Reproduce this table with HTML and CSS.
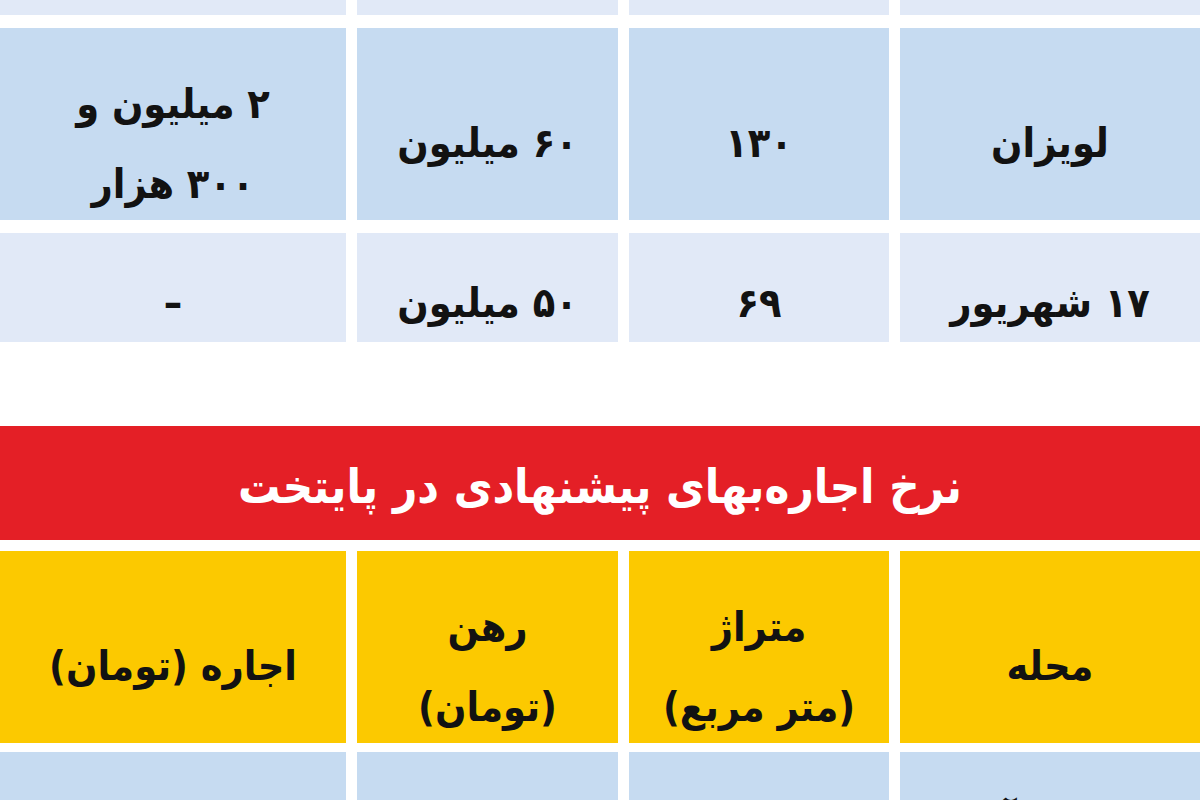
FILE: index.html
```html
<!DOCTYPE html>
<html lang="fa" dir="rtl">
<head>
<meta charset="utf-8">
<title>نرخ اجاره‌بهای پیشنهادی در پایتخت</title>
<link rel="stylesheet" href="styles.css">
</head>
<body>
<div class="page">
  <div class="table first">
    <div class="cell light short">پیروزی</div>
    <div class="cell light short">۸۵</div>
    <div class="cell light short">۴۰ میلیون</div>
    <div class="cell light short">۹۰۰ هزار</div>

    <div class="cell blue tall">لویزان</div>
    <div class="cell blue tall">۱۳۰</div>
    <div class="cell blue tall">۶۰ میلیون</div>
    <div class="cell blue tall two">۲ میلیون و<br>۳۰۰ هزار</div>

    <div class="cell light short">۱۷ شهریور</div>
    <div class="cell light short">۶۹</div>
    <div class="cell light short">۵۰ میلیون</div>
    <div class="cell light short">–</div>
  </div>

  <div class="title">نرخ اجاره‌بهای پیشنهادی در پایتخت</div>

  <div class="table second">
    <div class="cell yellow tall">محله</div>
    <div class="cell yellow tall two">متراژ<br>(متر مربع)</div>
    <div class="cell yellow tall two">رهن<br>(تومان)</div>
    <div class="cell yellow tall">اجاره (تومان)</div>

    <div class="cell blue short">سعادت‌آباد</div>
    <div class="cell blue short">۱۴۰</div>
    <div class="cell blue short">۲۰۰ میلیون</div>
    <div class="cell blue short">۴ میلیون</div>
  </div>
</div>
</body>
</html>
```
FILE: styles.css
```css
html, body {
  margin: 0;
  padding: 0;
  background: #ffffff;
  overflow: hidden;
}

.page {
  width: 1200px;
  height: 800px;
  overflow: hidden;
  direction: rtl;
  font-family: "DejaVu Sans Condensed", "DejaVu Sans", sans-serif;
  font-weight: bold;
  color: #121212;
}

.table {
  display: grid;
  grid-template-columns: 300px 260px 261px 1fr;
  column-gap: 11px;
}

.first {
  row-gap: 13px;
  margin-top: -94px;
}

.second {
  row-gap: 9px;
  margin-top: 11px;
}

.cell {
  display: flex;
  align-items: center;
  justify-content: center;
  text-align: center;
  font-size: 41px;
  line-height: 80px;
  box-sizing: border-box;
}

.tall {
  height: 192px;
  padding-top: 38px;
}

.tall.two {
  padding-top: 40px;
}

.short {
  height: 109px;
  padding-top: 30px;
}

.blue {
  background: #c6dbf1;
}

.light {
  background: #e1e9f7;
}

.yellow {
  background: #fcc900;
}

.title {
  margin-top: 84px;
  height: 114px;
  background: #e41f26;
  color: #ffffff;
  font-size: 47px;
  display: flex;
  align-items: center;
  justify-content: center;
  padding-top: 6px;
  box-sizing: border-box;
}
```
